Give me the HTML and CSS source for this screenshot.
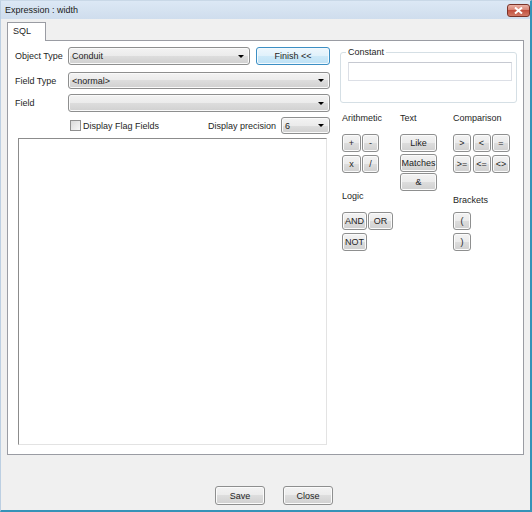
FILE: index.html
```html
<!DOCTYPE html>
<html lang="en">
<head>
  <meta charset="UTF-8">
  <title>Expression : width</title>
  <link rel="stylesheet" href="styles.css">
</head>
<body>
    <div class="window">
        <div class="titlebar">
            <span class="title">Expression : width</span>
            <div class="close-btn">
                <svg width="9" height="7" viewBox="0 0 9 7"><path d="M1 0.5 L8 6.5 M8 0.5 L1 6.5" stroke="#fff" stroke-width="2"/></svg>
            </div>
        </div>

        <div class="client">
            <div class="tabs">
                <div class="tab">SQL</div>
            </div>
            <div class="tab-page">
                <!-- left side: object / field pickers and the expression -->
                <div class="left-col">
                    <div class="row row-object">
                        <span class="field-label">Object Type</span>
                        <div class="combo combo-object"><span>Conduit</span><i class="arrow"></i></div>
                        <button class="btn btn-finish">Finish &lt;&lt;</button>
                    </div>
                    <div class="row row-fieldtype">
                        <span class="field-label">Field Type</span>
                        <div class="combo combo-wide"><span>&lt;normal&gt;</span><i class="arrow"></i></div>
                    </div>
                    <div class="row row-field">
                        <span class="field-label">Field</span>
                        <div class="combo combo-wide"><span></span><i class="arrow"></i></div>
                    </div>
                    <div class="row row-options">
                        <label class="check"><span class="checkbox"></span>Display Flag Fields</label>
                        <span class="precision-label">Display precision</span>
                        <div class="combo combo-precision"><span>6</span><i class="arrow"></i></div>
                    </div>
                    <div class="expression-box"></div>
                </div>

                <!-- right side: constant and operator buttons -->
                <div class="right-col">
                    <fieldset class="constant">
                        <legend>Constant</legend>
                        <input class="constant-input" type="text">
                    </fieldset>
                    <div class="operators">
                        <div class="op-col col-arith">
                            <div class="op-label">Arithmetic</div>
                            <div class="grid-arith">
                                <button class="btn op">+</button>
                                <button class="btn op">-</button>
                                <button class="btn op">x</button>
                                <button class="btn op">/</button>
                            </div>
                            <div class="op-label label-logic">Logic</div>
                            <div class="grid-logic">
                                <button class="btn op">AND</button>
                                <button class="btn op">OR</button>
                                <button class="btn op">NOT</button>
                            </div>
                        </div>
                        <div class="op-col col-text">
                            <div class="op-label">Text</div>
                            <button class="btn op btn-like">Like</button>
                            <button class="btn op btn-matches">Matches</button>
                            <button class="btn op btn-amp">&amp;</button>
                        </div>
                        <div class="op-col col-comp">
                            <div class="op-label">Comparison</div>
                            <div class="grid-comp">
                                <button class="btn op">&gt;</button>
                                <button class="btn op">&lt;</button>
                                <button class="btn op">=</button>
                                <button class="btn op">&gt;=</button>
                                <button class="btn op">&lt;=</button>
                                <button class="btn op">&lt;&gt;</button>
                            </div>
                            <div class="op-label label-brackets">Brackets</div>
                            <div class="grid-brackets">
                                <button class="btn op">(</button>
                                <button class="btn op">)</button>
                            </div>
                        </div>
                    </div>
                </div>
            </div>

            <div class="footer">
                <button class="btn footer-btn">Save</button>
                <button class="btn footer-btn">Close</button>
            </div>
        </div>
    </div>
</body>
</html>
```

FILE: styles.css
```css
* {
    margin: 0;
    padding: 0;
    box-sizing: border-box;
}
body {
    font-family: "Liberation Sans", Arial, sans-serif;
    font-size: 9px;
    color: #1e1e1e;
    background: #f0f0f0;
}
.window {
    width: 532px;
    height: 512px;
    display: flex;
    flex-direction: column;
    background: #f0f0f0;
    border-top: 1px solid #c9d8e7;
    border-left: 1px solid #bccfe2;
    border-right: 2px solid #3593b8;
    border-bottom: 2px solid #3593b8;
}
.titlebar {
    height: 18px;
    display: flex;
    align-items: flex-start;
    background: linear-gradient(#dce8f5, #cfdded);
}
.title {
    padding-left: 4px;
    line-height: 18px;
    color: #1a1a1a;
}
.close-btn {
    margin-left: auto;
    margin-top: 3px;
    width: 23px;
    height: 13px;
    display: flex;
    align-items: center;
    justify-content: center;
    border: 1px solid #7a3328;
    border-radius: 3px;
    background: linear-gradient(#eab2a6, #d98576 45%, #c2503f 50%, #d27a66);
}
.client {
    flex: 1;
    display: flex;
    flex-direction: column;
    padding: 3px 6px 0 6px;
}
.tabs {
    display: flex;
}
.tab {
    width: 39px;
    height: 19px;
    margin-bottom: -1px;
    padding-left: 5px;
    line-height: 17px;
    background: #fff;
    border: 1px solid #9a9ca3;
    border-bottom: none;
    position: relative;
    z-index: 1;
}
.tab-page {
    width: 517px;
    height: 415px;
    display: flex;
    background: #fff;
    border: 1px solid #9a9ca3;
}
.left-col {
    width: 315px;
    margin-left: 7px;
    display: flex;
    flex-direction: column;
}
.row {
    display: flex;
    align-items: center;
}
.row-object {
    margin-top: 6px;
    height: 18px;
}
.row-fieldtype {
    margin-top: 7px;
    height: 17px;
}
.row-field {
    margin-top: 5px;
    height: 18px;
}
.row-options {
    margin-top: 5px;
    height: 17px;
}
.field-label {
    width: 53px;
}
.combo {
    height: 100%;
    display: flex;
    align-items: center;
    padding-left: 3px;
    border: 1px solid #8e8f8f;
    border-radius: 3px;
    background: linear-gradient(#f3f3f3, #ebebeb 50%, #dddddd 50%, #d0d0d0);
    box-shadow: inset 0 0 0 1px #fafafa;
}
.arrow {
    margin-left: auto;
    margin-right: 5px;
    width: 0;
    height: 0;
    border-left: 3px solid transparent;
    border-right: 3px solid transparent;
    border-top: 3px solid #000;
}
.combo-object {
    width: 182px;
}
.combo-wide {
    width: 262px;
}
.combo-precision {
    width: 49px;
}
.btn {
    font-family: inherit;
    font-size: 9px;
    color: #1e1e1e;
    border: 1px solid #8e8f8f;
    border-radius: 3px;
    background: linear-gradient(#f3f3f3, #ebebeb 50%, #dddddd 50%, #d0d0d0);
    box-shadow: inset 0 0 0 1px #fbfbfb;
    cursor: pointer;
}
.btn-finish {
    width: 74px;
    height: 18px;
    margin-left: 6px;
    border-color: #3c8fc4;
    background: linear-gradient(#eef7fd, #e0f1fb 50%, #cde9f8 50%, #bfe2f6);
    box-shadow: inset 0 0 0 1px #f2f9fe;
}
.check {
    display: flex;
    align-items: center;
    margin-left: 55px;
}
.checkbox {
    width: 11px;
    height: 11px;
    margin-right: 2px;
    border: 1px solid #8f8f8f;
    background: linear-gradient(135deg, #d9d9d9, #f7f7f7);
}
.precision-label {
    margin-left: auto;
    margin-right: 5px;
}
.expression-box {
    width: 309px;
    height: 307px;
    margin-top: 4px;
    margin-left: 3px;
    background: #fff;
    border: 1px solid;
    border-color: #8c8c8c #e3e3e3 #e3e3e3 #8c8c8c;
}
.right-col {
    width: 177px;
    margin-left: 10px;
    display: flex;
    flex-direction: column;
}
.constant {
    margin-top: 6px;
    padding: 0 0 21px 7px;
    border: 1px solid #d5dfe5;
    border-radius: 3px;
    min-width: 0;
}
.constant legend {
    padding: 0 2px;
    margin-left: -2px;
    line-height: 11px;
}
.constant-input {
    display: block;
    width: 164px;
    height: 19px;
    margin-top: 4px;
    border: 1px solid #dcdfe6;
    border-top-color: #c6c9d1;
    background: #fff;
    outline: none;
}
.operators {
    display: flex;
    margin-top: 9px;
    margin-left: 2px;
}
.op-label {
    height: 12px;
    line-height: 12px;
}
.col-arith {
    width: 58px;
}
.col-text {
    width: 53px;
    display: flex;
    flex-direction: column;
}
.op-col .btn {
    height: 18px;
    padding: 0;
}
.grid-arith {
    margin-top: 10px;
    display: grid;
    grid-template-columns: 19px 17px;
    grid-auto-rows: 18px;
    column-gap: 1px;
    row-gap: 3px;
}
.label-logic {
    margin-top: 17px;
}
.grid-logic {
    margin-top: 10px;
    display: grid;
    grid-template-columns: 25px 25px;
    grid-auto-rows: 18px;
    column-gap: 1px;
    row-gap: 3px;
}
.col-text .btn {
    width: 37px;
}
.btn-like {
    margin-top: 10px;
}
.btn-matches {
    margin-top: 2px;
}
.btn-amp {
    margin-top: 1px;
}
.grid-comp {
    margin-top: 10px;
    display: grid;
    grid-template-columns: 18px 18px 18px;
    grid-auto-rows: 18px;
    column-gap: 1.5px;
    row-gap: 3px;
}
.label-brackets {
    margin-top: 21px;
}
.grid-brackets {
    margin-top: 6px;
    display: grid;
    grid-template-columns: 18px;
    grid-auto-rows: 18px;
    row-gap: 3px;
}
.footer {
    display: flex;
    gap: 18px;
    margin-top: 31px;
    padding-left: 208px;
}
.footer-btn {
    width: 50px;
    height: 19px;
}
```
